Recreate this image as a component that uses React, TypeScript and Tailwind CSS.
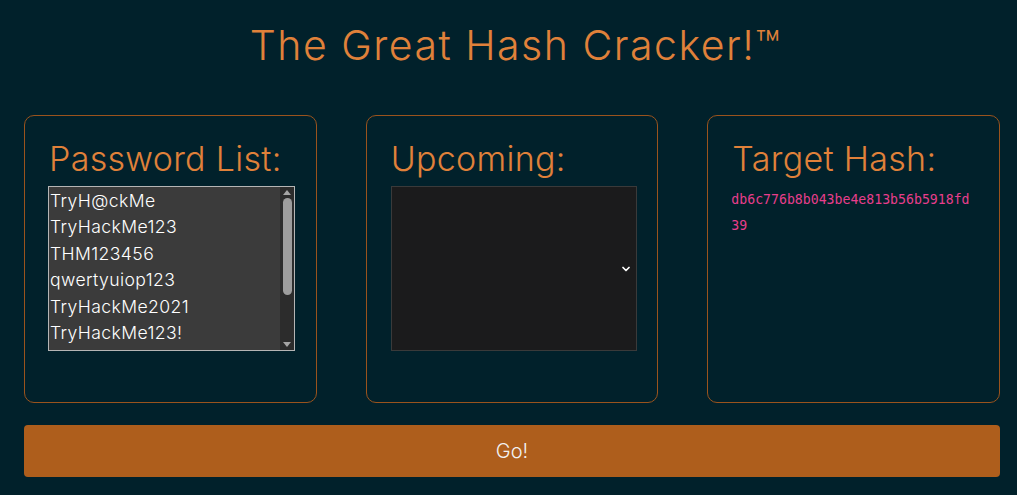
import { ChevronDown } from "lucide-react";

const passwords = [
  "TryH@ckMe",
  "TryHackMe123",
  "THM123456",
  "qwertyuiop123",
  "TryHackMe2021",
  "TryHackMe123!",
];

const font = { fontFamily: "Inter, 'Noto Sans', sans-serif" };

function Card({ title, children }: { title: string; children?: React.ReactNode }) {
  return (
    <div className="h-[288px] rounded-[10px] border border-[#9a531d] px-6 pt-[19px]">
      <h2 className="text-[34px] font-light leading-[48px] tracking-[0.3px] text-[#e0813a]">{title}</h2>
      <div className="mt-[3px]">{children}</div>
    </div>
  );
}

export default function App() {
  return (
    <div className="min-h-[495px] bg-[#01212b] pb-4" style={font}>
      <h1 className="pl-[14px] pt-[20px] text-center text-[41px] font-light leading-[50px] tracking-[1.5px] text-[#e0813a]">
        The Great Hash Cracker!™
      </h1>
      <div className="ml-6 mt-[45px] w-[976px]">
        <div className="grid grid-cols-3 gap-[49px]">
          <Card title="Password List:">
            <div className="-ml-[1px] flex h-[165px] w-[247px] border border-[#b5b5b5] bg-[#3b3b3b]">
              <ul className="flex-1 pl-[1px] pt-[1px] text-[17.6px] font-light leading-[26.4px] tracking-[0.4px] text-white">
                {passwords.map((p) => (
                  <li key={p}>{p}</li>
                ))}
              </ul>
              <div className="flex w-[14px] flex-col items-center bg-[#2c2c2c] py-[3px]">
                <span className="h-0 w-0 border-x-[4px] border-b-[5px] border-x-transparent border-b-[#a5a5a5]" />
                <span className="mt-[3px] h-[97px] w-[9px] rounded-full bg-[#9d9d9d]" />
                <span className="flex-1" />
                <span className="h-0 w-0 border-x-[4px] border-t-[5px] border-x-transparent border-t-[#a5a5a5]" />
              </div>
            </div>
          </Card>
          <Card title="Upcoming:">
            <div className="flex h-[165px] w-[246px] items-center justify-end border border-[#3a3a3a] bg-[#1b1b1c] pr-[4px]">
              <ChevronDown size={12} strokeWidth={3.5} className="text-white" />
            </div>
          </Card>
          <Card title="Target Hash:">
            <p
              className="-ml-[1px] mt-[4px] break-all text-[13.2px] leading-[26px] text-[#e83e8c]"
              style={{ fontFamily: "'DejaVu Sans Mono', monospace" }}
            >
              db6c776b8b043be4e813b56b5918fd39
            </p>
          </Card>
        </div>
        <button className="mt-[22px] h-[52px] w-full rounded-[4px] bg-[#ae5e1c] text-[20px] font-light text-[#f2f2f2]">
          Go!
        </button>
      </div>
    </div>
  );
}
